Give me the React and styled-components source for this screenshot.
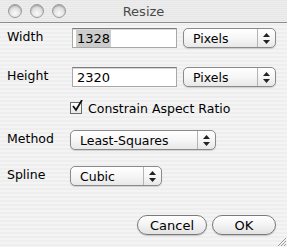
import styled, { createGlobalStyle } from 'styled-components';

const GlobalStyle = createGlobalStyle`
  html, body {
    margin: 0;
    padding: 0;
  }
  body {
    font-family: "DejaVu Sans", "Liberation Sans", sans-serif;
    font-size: 12.5px;
    color: #000;
  }
`;

const Window = styled.div`
  width: 287px;
  height: 247px;
  position: relative;
  display: flex;
  flex-direction: column;
  overflow: hidden;
  background: repeating-linear-gradient(
    to bottom,
    #eeeeee 0px,
    #eeeeee 2px,
    #f4f4f4 2px,
    #f4f4f4 4px
  );
`;

const TitleBar = styled.div`
  height: 22px;
  display: flex;
  align-items: center;
  position: relative;
  border-bottom: 1px solid #8c8c8c;
  background: repeating-linear-gradient(
    to bottom,
    #e6e6e6 0px,
    #e6e6e6 1px,
    #eeeeee 1px,
    #eeeeee 2px
  );
`;

const Lights = styled.div`
  display: flex;
  gap: 8px;
  padding-left: 8px;
  margin-top: -1px;
`;

const Light = styled.span`
  width: 12px;
  height: 12px;
  border-radius: 50%;
  border: 1px solid #9a9a9a;
  background: radial-gradient(circle at 50% 70%, #fafafa 0%, #e4e4e4 45%, #b8b8b8 100%);
  box-shadow: inset 0 1px 1px rgba(0, 0, 0, 0.2);
`;

const Title = styled.div`
  position: absolute;
  left: 0;
  right: 0;
  text-align: center;
  color: #4a4a4a;
  font-size: 13px;
`;

const Content = styled.div`
  display: flex;
  flex-direction: column;
  padding: 5px 11px 0 7px;
`;

const Row = styled.div`
  display: grid;
  grid-template-columns: 63px auto;
  align-items: center;
  margin-top: ${p => p.$gap || 0}px;
  height: ${p => p.$height || 20}px;
`;

const Label = styled.span`
  padding-bottom: 3px;
`;

const Fields = styled.div`
  display: flex;
  align-items: center;
  gap: 6px;
`;

const TextField = styled.div`
  margin-left: 2px;
  width: 100px;
  height: 18px;
  background: #fff;
  border: 1px solid #a8a8a8;
  border-top-color: #7c7c7c;
  box-shadow: inset 0 1px 0 #d8d8d8;
  display: flex;
  align-items: center;
  padding-left: 3px;
  box-sizing: content-box;
  font-size: 13px;
`;

const Selected = styled.span`
  background: ${p => (p.$on ? '#cccccc' : 'transparent')};
  padding: 1px 1px;
`;

const Popup = styled.div`
  width: ${p => p.$width}px;
  height: 18px;
  border: 1px solid #8a8a8a;
  border-radius: 5px;
  background: linear-gradient(to bottom, #ffffff 0%, #f6f6f6 50%, #e8e8e8 100%);
  box-shadow: 0 1px 1px rgba(0, 0, 0, 0.15);
  display: flex;
  align-items: stretch;
  box-sizing: content-box;
`;

const PopupText = styled.span`
  flex: 1;
  display: flex;
  align-items: center;
  padding-left: 9px;
`;

const Arrows = styled.span`
  width: 17px;
  border-left: 1px solid #b4b4b4;
  display: flex;
  align-items: center;
  justify-content: center;
`;

const CheckRow = styled.label`
  display: flex;
  align-items: center;
  gap: 6px;
  margin: 14px 0 0 63px;
  height: 14px;
`;

const Box = styled.span`
  width: 10px;
  height: 10px;
  border: 1px solid #6c6c6c;
  background: linear-gradient(to bottom, #ffffff, #e8e8e8);
  position: relative;
  display: inline-block;
`;

const Buttons = styled.div`
  display: flex;
  justify-content: flex-end;
  gap: 5px;
  margin-top: 29px;
`;

const Button = styled.div`
  width: ${p => p.$width}px;
  height: 18px;
  border: 1px solid #7a7a7a;
  border-radius: 10px;
  background: linear-gradient(to bottom, #ffffff 0%, #f3f3f3 50%, #e2e2e2 100%);
  box-shadow: 0 1px 1px rgba(0, 0, 0, 0.2);
  display: flex;
  align-items: center;
  justify-content: center;
  font-size: 13px;
  box-sizing: content-box;
`;

const Grip = styled.svg`
  position: absolute;
  right: 0;
  bottom: 0;
`;

function UpDown() {
  return (
    <svg width="7" height="11" viewBox="0 0 7 11">
      <path d="M3.5 0 L7 4 L0 4 Z" fill="#222" />
      <path d="M0 7 L7 7 L3.5 11 Z" fill="#222" />
    </svg>
  );
}

function Select({ width, value }) {
  return (
    <Popup $width={width}>
      <PopupText>{value}</PopupText>
      <Arrows>
        <UpDown />
      </Arrows>
    </Popup>
  );
}

export default function App() {
  return (
    <>
      <GlobalStyle />
      <Window>
        <TitleBar>
          <Lights>
            <Light />
            <Light />
            <Light />
          </Lights>
          <Title>Resize</Title>
        </TitleBar>
        <Content>
          <Row>
            <Label>Width</Label>
            <Fields>
              <TextField>
                <Selected $on>1328</Selected>
              </TextField>
              <Select width={91} value="Pixels" />
            </Fields>
          </Row>
          <Row $gap={19}>
            <Label>Height</Label>
            <Fields>
              <TextField>
                <Selected>2320</Selected>
              </TextField>
              <Select width={91} value="Pixels" />
            </Fields>
          </Row>
          <CheckRow>
            <Box>
              <svg width="12" height="12" viewBox="0 0 12 12" style={{ position: 'absolute', left: 0, top: -3 }}>
                <path d="M2 6 L5 10 L11 0" stroke="#111" strokeWidth="1.8" fill="none" />
              </svg>
            </Box>
            Constrain Aspect Ratio
          </CheckRow>
          <Row $gap={15}>
            <Label>Method</Label>
            <Fields>
              <Select width={144} value="Least-Squares" />
            </Fields>
          </Row>
          <Row $gap={16}>
            <Label>Spline</Label>
            <Fields>
              <Select width={90} value="Cubic" />
            </Fields>
          </Row>
          <Buttons>
            <Button $width={68}>Cancel</Button>
            <Button $width={62}>OK</Button>
          </Buttons>
        </Content>
        <Grip width="12" height="12" viewBox="0 0 12 12">
          <path d="M11 3 L3 11 M11 6 L6 11 M11 9 L9 11" stroke="#9a9a9a" strokeWidth="1" />
        </Grip>
      </Window>
    </>
  );
}
